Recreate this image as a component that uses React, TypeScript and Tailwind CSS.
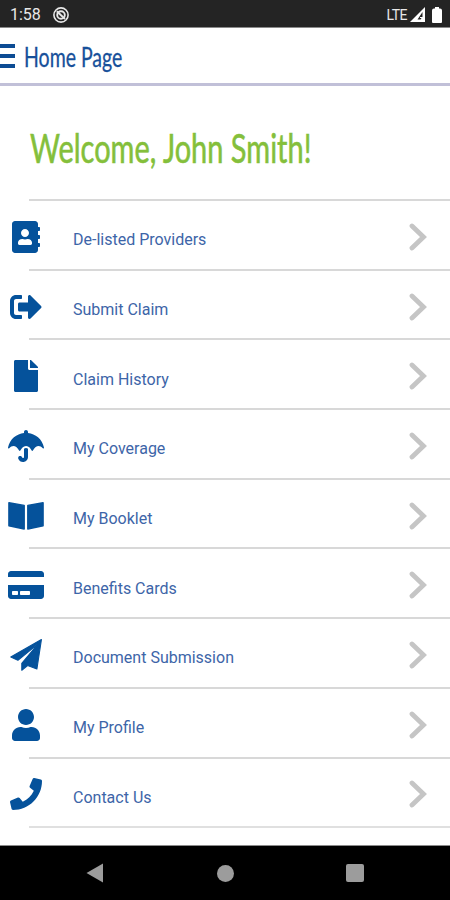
import type { ComponentType } from 'react';
import {
  FaAddressBook,
  FaCreditCard,
  FaFile,
  FaPhone,
  FaSignOutAlt,
  FaUmbrella,
  FaUser,
} from 'react-icons/fa';

interface IconProps {
  className?: string;
}

interface MenuItem {
  label: string;
  icon: ComponentType<IconProps>;
}

function BookletIcon({ className }: IconProps) {
  return (
    <svg className={className} viewBox="0 0 36 32" fill="currentColor" stroke="currentColor" strokeLinejoin="round">
      <path d="M.9 2.7 16.2 5.4V29L.9 25.8zM35.1 2.7 19.8 5.4V29l15.3-3.2z" strokeWidth="1.4" />
    </svg>
  );
}

function PlaneIcon({ className }: IconProps) {
  return (
    <svg className={className} viewBox="0 0 32 32" fill="currentColor" stroke="currentColor" strokeLinejoin="round">
      <path d="M31.4.6.8 18.1l7.1 3.1L28.4 4.6 11.8 24.3v7l5.8-4.7 9.3 3.4z" strokeWidth="1.1" />
    </svg>
  );
}

const menuItems: MenuItem[] = [
  { label: 'De-listed Providers', icon: FaAddressBook },
  { label: 'Submit Claim', icon: FaSignOutAlt },
  { label: 'Claim History', icon: FaFile },
  { label: 'My Coverage', icon: FaUmbrella },
  { label: 'My Booklet', icon: BookletIcon },
  { label: 'Benefits Cards', icon: FaCreditCard },
  { label: 'Document Submission', icon: PlaneIcon },
  { label: 'My Profile', icon: FaUser },
  { label: 'Contact Us', icon: FaPhone },
];

function StatusBar() {
  return (
    <div className="flex h-7 shrink-0 items-center border-b border-[#8a8a8a] bg-[#242424] pl-[10px] pr-[8px] pt-[2px] text-[#e8e8e8]">
      <span className="text-[16px] leading-none">1:58</span>
      <svg className="ml-3 size-4" viewBox="0 0 16 16" fill="none" stroke="currentColor">
        <circle cx="8" cy="8" r="7.1" strokeWidth="1.6" />
        <circle cx="8" cy="8" r="3.8" strokeWidth="1.9" />
        <path d="M3.8 4.2 12 12" strokeWidth="1.9" />
      </svg>
      <span className="ml-auto text-[14px] leading-none tracking-[-0.5px]">LTE</span>
      <svg className="ml-[3px] h-[15px] w-[15px]" viewBox="0 0 15 15">
        <path d="M0 15 15 0v15z" fill="#fff" />
        <path d="M7.5 12.5 12.5 5v4.5l-2 3z" fill="#242424" />
        <path d="M10 10.5h2.5" stroke="#fff" />
      </svg>
      <svg className="ml-[7px] h-4 w-[10px]" viewBox="0 0 10 16">
        <path d="M3 0h4v1.5h1a2 2 0 0 1 2 2V15a1 1 0 0 1-1 1H1a1 1 0 0 1-1-1V3.5a2 2 0 0 1 2-2h1z" fill="#fff" />
      </svg>
    </div>
  );
}

function Header() {
  return (
    <header className="flex h-[58px] shrink-0 items-center border-b-[3px] border-[#c1c0d8] text-[#17509a]">
      <button type="button" aria-label="Menu" className="flex w-[15px] flex-col gap-[6px]">
        <span className="h-1 bg-[#0d4c94]" />
        <span className="h-1 bg-[#0d4c94]" />
        <span className="h-1 bg-[#0d4c94]" />
      </button>
      <h1 className="ml-[9px] origin-left scale-x-[0.75] pt-[2px] font-['Lato',sans-serif] text-[26px] leading-none whitespace-nowrap [-webkit-text-stroke:0.3px]">
        Home Page
      </h1>
    </header>
  );
}

function MenuRow({ label, icon: Icon }: MenuItem) {
  return (
    <li className="flex h-[69.7px] flex-col">
      <div className="ml-[29px] h-[2px] shrink-0 bg-[#d8d8d8]" />
      <button type="button" className="flex flex-1 items-center pt-1 text-left">
        <span className="flex w-[52px] justify-center">
          <Icon className="h-8 w-9 text-[#05529b]" />
        </span>
        <span className="ml-[21px] pt-[7px] text-[16px] leading-5 text-[#3d65a8]">{label}</span>
        <svg className="mr-[23px] ml-auto h-[28px] w-[18px]" viewBox="0 0 18 28" fill="none">
          <path d="M3 3 14.5 14 3 25" stroke="#c5c5c5" strokeWidth="4.8" strokeLinecap="round" />
        </svg>
      </button>
    </li>
  );
}

function NavigationBar() {
  return (
    <nav className="flex h-[55px] shrink-0 items-center justify-between border-t border-[#8a8a8a] bg-black px-[86px] text-[#9c9c9c]">
      <svg className="h-5 w-[17px]" viewBox="0 0 17 20" fill="currentColor">
        <path d="M0.5 10 17 0.5v19z" />
      </svg>
      <span className="ml-[2px] size-[17px] rounded-full bg-current" />
      <span className="size-[18px] rounded-[2px] bg-current" />
    </nav>
  );
}

export default function App() {
  return (
    <div className="flex h-[900px] w-[450px] flex-col overflow-hidden bg-white font-['Roboto',sans-serif]">
      <StatusBar />
      <Header />
      <main className="flex-1">
        <h2 className="flex h-[113px] items-center pt-[10px] pl-[30px]">
          <span className="origin-left scale-x-[0.725] font-['Lato',sans-serif] text-[40px] leading-none whitespace-nowrap text-[#84bf3b] [-webkit-text-stroke:0.6px]">
            Welcome, John Smith!
          </span>
        </h2>
        <ul>
          {menuItems.map((item) => (
            <MenuRow key={item.label} {...item} />
          ))}
        </ul>
        <div className="ml-[29px] h-[2px] bg-[#e0e0e0]" />
      </main>
      <NavigationBar />
    </div>
  );
}
